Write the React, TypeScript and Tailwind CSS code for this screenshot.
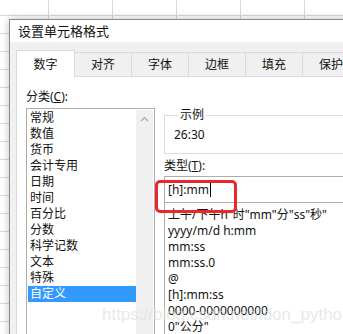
import React from "react"

const categories = ["常规", "数值", "货币", "会计专用", "日期", "时间", "百分比", "分数", "科学记数", "文本", "特殊", "自定义"]
const formats = [
  '上午/下午h"时"mm"分"ss"秒"',
  "yyyy/m/d h:mm",
  "mm:ss",
  "mm:ss.0",
  "@",
  "[h]:mm:ss",
  "0000-0000000000",
  '0"公分"',
]
const tabs = ["对齐", "字体", "边框", "填充", "保护"]

const font = "font-['Noto_Sans','Noto_Sans_CJK_SC',sans-serif]"

function SheetGrid() {
  const rows = Array.from({ length: 19 })
  return (
    <div className="flex flex-col">
      {rows.map((_, i) => (
        <div key={i} className={`flex border-b border-[#dadada] ${i === 0 ? "h-[16px]" : "h-[18px]"}`}>
          <div className="w-[49px] shrink-0 border-r border-[#dadada]" />
          <div className="w-[64px] shrink-0 border-r border-[#dadada]" />
          <div className="w-[64px] shrink-0 border-r border-[#dadada]" />
          <div className="w-[64px] shrink-0 border-r border-[#dadada]" />
          <div className="w-[64px] shrink-0 border-r border-[#dadada]" />
          <div className="w-[64px] shrink-0 border-r border-[#dadada]" />
        </div>
      ))}
    </div>
  )
}

export default function App() {
  return (
    <div className={`relative w-[343px] h-[334px] overflow-hidden bg-white text-[#111] ${font}`}>
      <SheetGrid />

      <div className="absolute left-[9px] top-[19px] w-[370px] h-[330px] border border-[#8c8c8c] bg-[#f0f0f0] shadow-[0_0_8px_rgba(0,0,0,0.25)] flex flex-col">
        <div className="h-[30px] bg-white flex items-center pl-[8px] text-[13px] leading-none">设置单元格格式</div>

        <div className="flex-1 flex flex-col pl-[6px] pt-[8px]">
          <div className="flex items-end h-[26px] text-[12px]">
            <div className="relative z-10 w-[59px] h-[27px] -mb-px bg-white border border-b-0 border-[#d9d9d9] flex items-center justify-center pt-[2px]">
              数字
            </div>
            {tabs.map((t) => (
              <div key={t} className="w-[57px] h-[24px] border-t border-r border-[#d9d9d9] flex items-center justify-center shrink-0 pt-[1px]">
                {t}
              </div>
            ))}
          </div>

          <div className="flex-1 bg-white border-t border-l border-[#d9d9d9] flex items-start pl-[9px] pt-[11px] text-[12px]">
            <div className="w-[129px] shrink-0 flex flex-col">
              <div className="h-[18px] leading-[18px]">
                分类(<span className="underline">C</span>):
              </div>
              <div className="mt-[2px] h-[240px] border border-[#adadad] flex p-px">
                <div className="flex-1 flex flex-col">
                  {categories.map((c, i) => (
                    <div
                      key={c}
                      className={`h-[16px] leading-[16px] pl-[2px] ${i === categories.length - 1 ? "bg-[#3399ff] text-white" : ""}`}
                    >
                      {c}
                    </div>
                  ))}
                </div>
                <div className="w-[17px] bg-[#f0f0f0] flex justify-center pt-[6px]">
                  <svg width="9" height="6" viewBox="0 0 9 6" fill="none">
                    <path d="M1 5 L4.5 1.5 L8 5" stroke="#a6a6a6" strokeWidth="1.2" />
                  </svg>
                </div>
              </div>
            </div>

            <div className="ml-[9px] flex-1 flex flex-col mt-[19px]">
              <fieldset className="border border-[#dcdcdc] h-[47px] pl-[9px]">
                <legend className="ml-[4px] px-[2px] leading-[16px]">示例</legend>
                <div className="h-[16px] leading-[16px] mt-[4px]">26:30</div>
              </fieldset>
              <div className="h-[16px] leading-[16px] mt-[4px]">
                类型(<span className="underline">T</span>):
              </div>
              <div className="mt-[2px] h-[27px] border border-[#adadad] flex items-center pl-[3px]">
                <span>[h]:mm</span>
                <span className="ml-px w-px h-[15px] bg-black" />
              </div>
              <div className="h-[140px] border border-t-0 border-[#adadad] pt-[4px] pl-[3px]">
                {formats.map((f) => (
                  <div key={f} className="h-[16px] leading-[16px] whitespace-nowrap">
                    {f}
                  </div>
                ))}
              </div>
            </div>
          </div>
        </div>
      </div>

      <div className="absolute left-[155px] top-[180px] w-[82px] h-[33px] border-[3px] border-[#e8282c] rounded-[5px]" />

      <div className="absolute left-[102px] top-[305px] text-[17px] leading-[20px] text-[#dedede]/70 font-['Liberation_Sans',sans-serif] whitespace-nowrap">
        https://blog.csdn.net/ldon_python
      </div>
    </div>
  )
}
